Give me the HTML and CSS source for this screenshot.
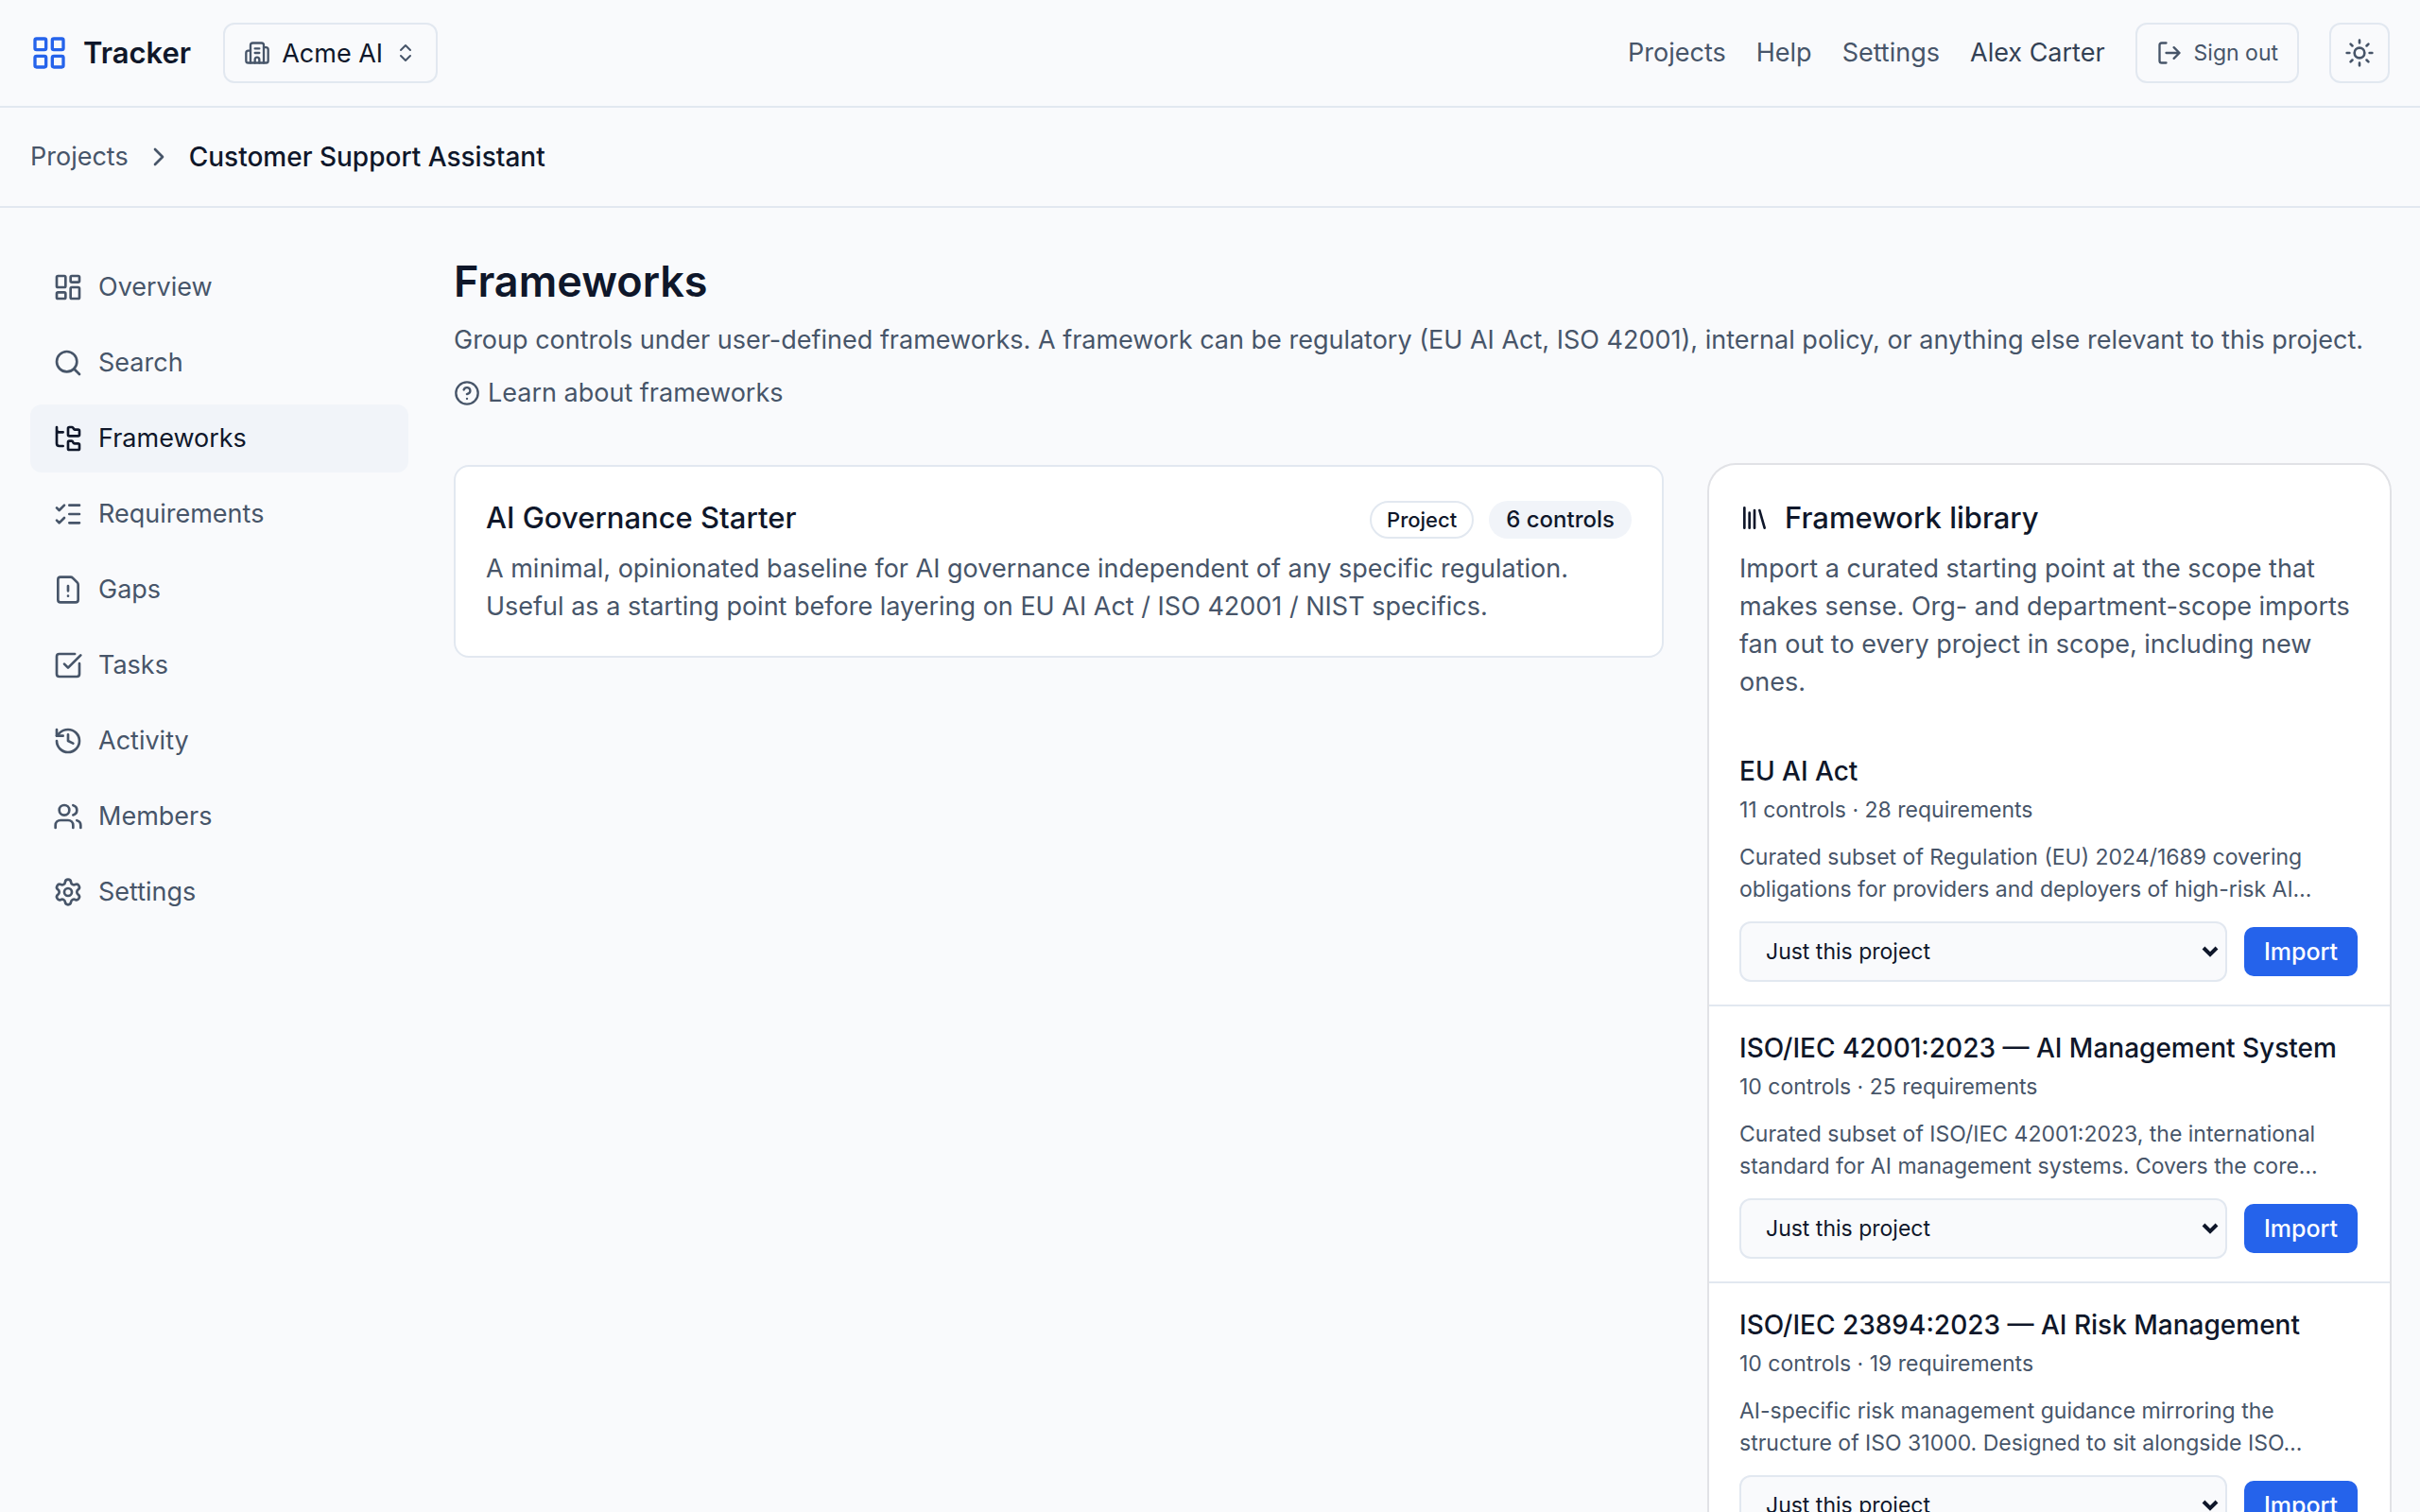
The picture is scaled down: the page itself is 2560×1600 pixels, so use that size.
FILE: index.html
```html
<!DOCTYPE html>
<html lang="en">
<head>
    <meta charset="UTF-8">
    <meta name="viewport" content="width=device-width, initial-scale=1.0">
    <title>Frameworks - Tracker</title>
    <link rel="stylesheet" href="styles.css">
</head>
<body>
    <!-- icon sprite -->
    <svg class="sprite" aria-hidden="true">
        <symbol id="i-grid" viewBox="0 0 24 24"><rect x="3" y="3" width="7" height="7" rx="1"/><rect x="14" y="3" width="7" height="7" rx="1"/><rect x="14" y="14" width="7" height="7" rx="1"/><rect x="3" y="14" width="7" height="7" rx="1"/></symbol>
        <symbol id="i-building" viewBox="0 0 24 24"><path d="M10 12h4M10 8h4M14 21v-3a2 2 0 0 0-4 0v3"/><path d="M6 10H4a2 2 0 0 0-2 2v7a2 2 0 0 0 2 2h16a2 2 0 0 0 2-2V9a2 2 0 0 0-2-2h-2"/><path d="M6 21V5a2 2 0 0 1 2-2h8a2 2 0 0 1 2 2v16"/></symbol>
        <symbol id="i-updown" viewBox="0 0 24 24"><path d="m7 15 5 5 5-5M7 9l5-5 5 5"/></symbol>
        <symbol id="i-logout" viewBox="0 0 24 24"><path d="m16 17 5-5-5-5M21 12H9M9 21H5a2 2 0 0 1-2-2V5a2 2 0 0 1 2-2h4"/></symbol>
        <symbol id="i-sun" viewBox="0 0 24 24"><circle cx="12" cy="12" r="4"/><path d="M12 2v2M12 20v2M4.93 4.93l1.41 1.41M17.66 17.66l1.41 1.41M2 12h2M20 12h2M6.34 17.66l-1.41 1.41M19.07 4.93l-1.41 1.41"/></symbol>
        <symbol id="i-right" viewBox="0 0 24 24"><path d="m9 18 6-6-6-6"/></symbol>
        <symbol id="i-dashboard" viewBox="0 0 24 24"><rect x="3" y="3" width="7" height="9" rx="1"/><rect x="14" y="3" width="7" height="5" rx="1"/><rect x="14" y="12" width="7" height="9" rx="1"/><rect x="3" y="16" width="7" height="5" rx="1"/></symbol>
        <symbol id="i-search" viewBox="0 0 24 24"><circle cx="11" cy="11" r="8"/><path d="m21 21-4.34-4.34"/></symbol>
        <symbol id="i-tree" viewBox="0 0 24 24"><path d="M20 10a1 1 0 0 0 1-1V6a1 1 0 0 0-1-1h-2.5a1 1 0 0 1-.8-.4l-.9-1.2A1 1 0 0 0 15 3h-2a1 1 0 0 0-1 1v5a1 1 0 0 0 1 1Z"/><path d="M20 21a1 1 0 0 0 1-1v-3a1 1 0 0 0-1-1h-2.9a1 1 0 0 1-.88-.55l-.42-.85a1 1 0 0 0-.92-.6H13a1 1 0 0 0-1 1v5a1 1 0 0 0 1 1Z"/><path d="M3 5a2 2 0 0 0 2 2h3M3 3v13a2 2 0 0 0 2 2h3"/></symbol>
        <symbol id="i-checks" viewBox="0 0 24 24"><path d="M13 5h8M13 12h8M13 19h8M3 17l2 2 4-4M3 7l2 2 4-4"/></symbol>
        <symbol id="i-file" viewBox="0 0 24 24"><path d="M6 22a2 2 0 0 1-2-2V4a2 2 0 0 1 2-2h8a2.4 2.4 0 0 1 1.704.706l3.588 3.588A2.4 2.4 0 0 1 20 8v12a2 2 0 0 1-2 2z"/><path d="M12 9v4M12 17h.01"/></symbol>
        <symbol id="i-task" viewBox="0 0 24 24"><path d="M21 10.656V19a2 2 0 0 1-2 2H5a2 2 0 0 1-2-2V5a2 2 0 0 1 2-2h12.344"/><path d="m9 11 3 3L22 4"/></symbol>
        <symbol id="i-history" viewBox="0 0 24 24"><path d="M3 12a9 9 0 1 0 9-9 9.75 9.75 0 0 0-6.74 2.74L3 8"/><path d="M3 3v5h5M12 7v5l4 2"/></symbol>
        <symbol id="i-users" viewBox="0 0 24 24"><path d="M16 21v-2a4 4 0 0 0-4-4H6a4 4 0 0 0-4 4v2M16 3.128a4 4 0 0 1 0 7.744M22 21v-2a4 4 0 0 0-3-3.87"/><circle cx="9" cy="7" r="4"/></symbol>
        <symbol id="i-settings" viewBox="0 0 24 24"><path d="M9.671 4.136a2.34 2.34 0 0 1 4.659 0 2.34 2.34 0 0 0 3.319 1.915 2.34 2.34 0 0 1 2.33 4.033 2.34 2.34 0 0 0 0 3.831 2.34 2.34 0 0 1-2.33 4.033 2.34 2.34 0 0 0-3.319 1.915 2.34 2.34 0 0 1-4.659 0 2.34 2.34 0 0 0-3.32-1.915 2.34 2.34 0 0 1-2.33-4.033 2.34 2.34 0 0 0 0-3.831A2.34 2.34 0 0 1 6.35 6.051a2.34 2.34 0 0 0 3.319-1.915"/><circle cx="12" cy="12" r="3"/></symbol>
        <symbol id="i-help" viewBox="0 0 24 24"><circle cx="12" cy="12" r="10"/><path d="M9.09 9a3 3 0 0 1 5.83 1c0 2-3 3-3 3M12 17h.01"/></symbol>
        <symbol id="i-library" viewBox="0 0 24 24"><path d="m16 6 4 14M12 6v14M8 8v12M4 4v16"/></symbol>
        <symbol id="i-caret" viewBox="0 0 20 12"><path d="m3 2 7 7 7-7"/></symbol>
    </svg>

    <header class="topbar">
        <a class="brand" href="#"><svg class="icon icon-xl"><use href="#i-grid"/></svg>Tracker</a>
        <button class="btn-outline org-switch" type="button">
            <svg class="icon icon-md"><use href="#i-building"/></svg>Acme AI<svg class="icon icon-sm"><use href="#i-updown"/></svg>
        </button>
        <nav class="topnav">
            <a href="#">Projects</a>
            <a href="#">Help</a>
            <a href="#">Settings</a>
            <span class="user">Alex Carter</span>
            <button class="btn-outline sign-out" type="button"><svg class="icon icon-md"><use href="#i-logout"/></svg>Sign out</button>
            <button class="btn-outline theme" type="button" aria-label="Toggle theme"><svg class="icon"><use href="#i-sun"/></svg></button>
        </nav>
    </header>

    <nav class="breadcrumb" aria-label="Breadcrumb">
        <a href="#">Projects</a>
        <svg class="icon"><use href="#i-right"/></svg>
        <span class="current">Customer Support Assistant</span>
    </nav>

    <div class="layout">
        <nav class="sidebar">
            <a href="#"><svg class="icon"><use href="#i-dashboard"/></svg>Overview</a>
            <a href="#"><svg class="icon"><use href="#i-search"/></svg>Search</a>
            <a href="#" class="active"><svg class="icon"><use href="#i-tree"/></svg>Frameworks</a>
            <a href="#"><svg class="icon"><use href="#i-checks"/></svg>Requirements</a>
            <a href="#"><svg class="icon"><use href="#i-file"/></svg>Gaps</a>
            <a href="#"><svg class="icon"><use href="#i-task"/></svg>Tasks</a>
            <a href="#"><svg class="icon"><use href="#i-history"/></svg>Activity</a>
            <a href="#"><svg class="icon"><use href="#i-users"/></svg>Members</a>
            <a href="#"><svg class="icon"><use href="#i-settings"/></svg>Settings</a>
        </nav>

        <main class="content">
            <h1>Frameworks</h1>
            <p class="lead">Group controls under user-defined frameworks. A framework can be regulatory (EU AI Act, ISO 42001), internal policy, or anything else relevant to this project.</p>
            <a class="learn" href="#"><svg class="icon icon-md"><use href="#i-help"/></svg>Learn about frameworks</a>

            <div class="columns">
                <article class="framework">
                    <div class="framework-head">
                        <h2>AI Governance Starter</h2>
                        <div class="badges">
                            <span class="badge badge-outline">Project</span>
                            <span class="badge">6 controls</span>
                        </div>
                    </div>
                    <p>A minimal, opinionated baseline for AI governance independent of any specific regulation.<br>Useful as a starting point before layering on EU AI Act / ISO 42001 / NIST specifics.</p>
                </article>

                <aside class="library">
                    <div class="library-head">
                        <h2><svg class="icon"><use href="#i-library"/></svg>Framework library</h2>
                        <p>Import a curated starting point at the scope that makes sense. Org- and department-scope imports fan out to every project in scope, including new ones.</p>
                    </div>
                    <ul>
                        <li>
                            <h3>EU AI Act</h3>
                            <p class="meta">11 controls · 28 requirements</p>
                            <p class="desc">Curated subset of Regulation (EU) 2024/1689 covering obligations for providers and deployers of high-risk AI…</p>
                            <form class="import">
                                <div class="select-wrap">
                                    <select aria-label="Import scope for EU AI Act"><option>Just this project</option></select>
                                    <svg class="caret"><use href="#i-caret"/></svg>
                                </div>
                                <button type="button">Import</button>
                            </form>
                        </li>
                        <li>
                            <h3>ISO/IEC 42001:2023 — AI Management System</h3>
                            <p class="meta">10 controls · 25 requirements</p>
                            <p class="desc">Curated subset of ISO/IEC 42001:2023, the international standard for AI management systems. Covers the core…</p>
                            <form class="import">
                                <div class="select-wrap">
                                    <select aria-label="Import scope for ISO/IEC 42001:2023"><option>Just this project</option></select>
                                    <svg class="caret"><use href="#i-caret"/></svg>
                                </div>
                                <button type="button">Import</button>
                            </form>
                        </li>
                        <li>
                            <h3>ISO/IEC 23894:2023 — AI Risk Management</h3>
                            <p class="meta">10 controls · 19 requirements</p>
                            <p class="desc">AI-specific risk management guidance mirroring the structure of ISO 31000. Designed to sit alongside ISO…</p>
                            <form class="import">
                                <div class="select-wrap">
                                    <select aria-label="Import scope for ISO/IEC 23894:2023"><option>Just this project</option></select>
                                    <svg class="caret"><use href="#i-caret"/></svg>
                                </div>
                                <button type="button">Import</button>
                            </form>
                        </li>
                    </ul>
                </aside>
            </div>
        </main>
    </div>
</body>
</html>
```

FILE: styles.css
```css
* {
    box-sizing: border-box;
}

html {
    scrollbar-width: none;
}

body {
    margin: 0;
    min-height: 100vh;
    font-family: Inter, "Liberation Sans", sans-serif;
    font-size: 27px;
    line-height: 40px;
    color: #0f172a;
    background: #f9fafc;
}

h1, h2, h3, p, ul {
    margin: 0;
    padding: 0;
}

a {
    color: inherit;
    text-decoration: none;
}

button, select {
    font-family: inherit;
    cursor: pointer;
}

.sprite {
    display: none;
}

.icon {
    width: 32px;
    height: 32px;
    flex: none;
    fill: none;
    stroke: currentColor;
    stroke-width: 2;
    stroke-linecap: round;
    stroke-linejoin: round;
}

.icon-sm { width: 24px; height: 24px; }
.icon-md { width: 28px; height: 28px; }
.icon-xl { width: 40px; height: 40px; }

/* top bar */
.topbar {
    display: flex;
    align-items: center;
    gap: 34px;
    padding: 24px 32px;
    border-bottom: 2px solid #e2e8f0;
}

.brand {
    display: flex;
    align-items: center;
    gap: 16px;
    font-size: 31px;
    font-weight: 600;
}

.brand .icon {
    color: #2563eb;
}

.btn-outline {
    display: flex;
    align-items: center;
    justify-content: center;
    gap: 12px;
    height: 64px;
    padding: 0 20px;
    border: 2px solid #e2e8f0;
    border-radius: 12px;
    background: #f9fafc;
    color: #475569;
}

.org-switch {
    font-size: 27px;
    color: #0f172a;
}

.org-switch .icon {
    color: #475569;
}

.topnav {
    display: flex;
    align-items: center;
    gap: 32px;
    margin-left: auto;
    color: #475569;
}

.user {
    color: #334155;
}

.sign-out {
    font-size: 23px;
}

.theme {
    width: 64px;
    padding: 0;
}

/* breadcrumb */
.breadcrumb {
    display: flex;
    align-items: center;
    gap: 16px;
    padding: 32px;
    border-bottom: 2px solid #e2e8f0;
    color: #475569;
}

.current {
    font-size: 28px;
    font-weight: 500;
    color: #0f172a;
}

/* page */
.layout {
    display: grid;
    grid-template-columns: 400px minmax(0, 1fr);
    gap: 48px;
    padding: 48px 32px;
}

.sidebar {
    display: flex;
    flex-direction: column;
    gap: 8px;
}

.sidebar a {
    display: flex;
    align-items: center;
    gap: 16px;
    padding: 16px 24px;
    border-radius: 12px;
    color: #475569;
}

.sidebar .active {
    background: #f1f4f9;
    color: #0f172a;
}

h1 {
    font-size: 45px;
    font-weight: 600;
    line-height: 60px;
}

.lead {
    margin-top: 12px;
    color: #475569;
}

.learn {
    display: flex;
    align-items: center;
    gap: 8px;
    width: fit-content;
    margin-top: 16px;
    color: #475569;
}

.columns {
    display: grid;
    grid-template-columns: minmax(0, 1fr) 720px;
    align-items: start;
    gap: 48px;
    margin-top: 56px;
}

h2 {
    font-size: 31px;
    font-weight: 500;
    line-height: 44px;
}

.framework {
    padding: 32px;
    border: 2px solid #e2e8f0;
    border-radius: 16px;
    background: #fff;
}

.framework-head {
    display: flex;
    justify-content: space-between;
    margin-bottom: 12px;
}

.framework p,
.library p {
    color: #475569;
}

.badges {
    display: flex;
    align-items: flex-end;
    gap: 16px;
}

.badge {
    height: 40px;
    padding: 0 18px;
    border-radius: 20px;
    background: #f1f4f9;
    font-size: 24px;
    font-weight: 500;
}

.badge-outline {
    padding: 0 16px;
    border: 2px solid #e2e8f0;
    background: #fff;
    font-size: 22px;
    line-height: 36px;
}

/* framework library */
.library {
    border-radius: 28px;
    background: #fff;
    box-shadow: 0 0 0 2px rgba(15, 23, 42, 0.1);
}

.library-head {
    padding: 34px 32px 30px;
}

.library-head h2 {
    display: flex;
    align-items: center;
    gap: 16px;
    margin-bottom: 12px;
}

.library ul {
    list-style: none;
}

.library li {
    padding: 24px 32px;
}

.library li + li {
    border-top: 2px solid #e2e8f0;
}

h3 {
    font-size: 28px;
    font-weight: 500;
    line-height: 40px;
}

.meta,
.desc {
    font-size: 23px;
    line-height: 34px;
}

.meta {
    margin-top: 4px;
}

.desc {
    margin-top: 16px;
}

.import {
    display: flex;
    align-items: center;
    gap: 18px;
    margin-top: 17px;
    padding-right: 2px;
}

.select-wrap {
    position: relative;
    flex: 1;
}

.import select {
    display: block;
    width: 100%;
    height: 64px;
    padding: 0 26px;
    border: 2px solid #e2e8f0;
    border-radius: 12px;
    background: #f9fafc;
    color: #0f172a;
    font-size: 23px;
    appearance: none;
}

.caret {
    position: absolute;
    top: 26px;
    right: 8px;
    width: 20px;
    height: 12px;
    fill: none;
    stroke: #0f172a;
    stroke-width: 4;
    pointer-events: none;
}

.import button {
    width: 120px;
    height: 52px;
    padding: 0;
    border: 0;
    border-radius: 10px;
    background: #2563eb;
    color: #fff;
    font-size: 25px;
    font-weight: 500;
}
```
